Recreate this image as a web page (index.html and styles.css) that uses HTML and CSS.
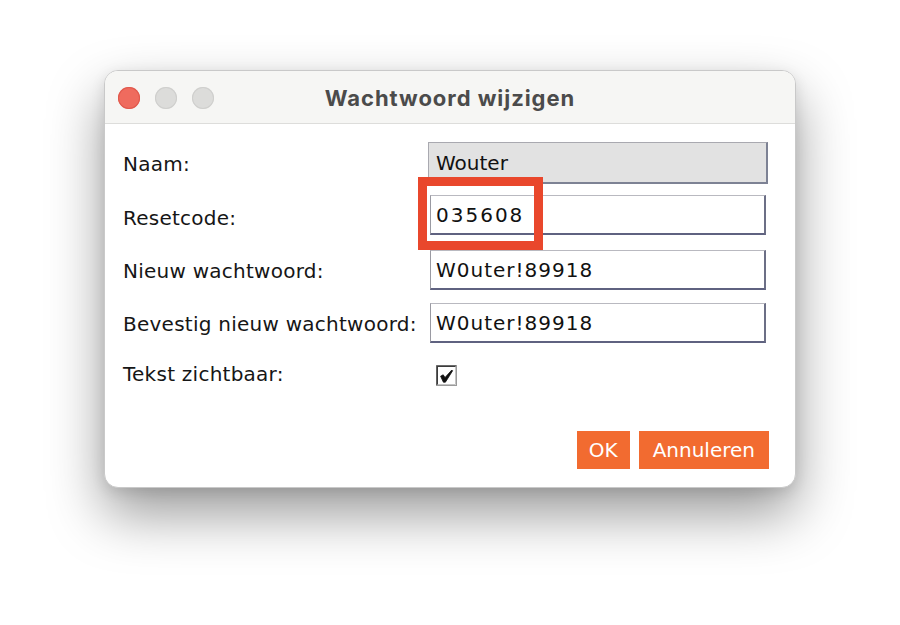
FILE: index.html
```html
<!DOCTYPE html>
<html lang="nl">
<head>
<meta charset="utf-8">
<title>Wachtwoord wijzigen</title>
<link rel="stylesheet" href="styles.css">
</head>
<body>
  <div class="window">
    <div class="titlebar">
      <div class="lights">
        <span class="light light-close"></span>
        <span class="light"></span>
        <span class="light"></span>
      </div>
      <div class="title">Wachtwoord wijzigen</div>
      <div></div>
    </div>
    <div class="content">
      <div class="form">
        <label class="label">Naam:</label>
        <div class="field field-readonly">Wouter</div>

        <label class="label">Resetcode:</label>
        <div class="field field-edit field-code">
          035608
          <span class="highlight"></span>
        </div>

        <label class="label">Nieuw wachtwoord:</label>
        <div class="field field-edit">W0uter!89918</div>

        <label class="label">Bevestig nieuw wachtwoord:</label>
        <div class="field field-edit">W0uter!89918</div>

        <label class="label">Tekst zichtbaar:</label>
        <div class="check-cell">
          <svg class="checkbox" width="21" height="21" viewBox="0 0 21 21">
            <rect x="0.5" y="0.5" width="20" height="20" fill="#fff" stroke="#9a9a9a"/>
            <path d="M1.2 20 V1.2 H20" fill="none" stroke="#3c3c3c" stroke-width="1.6"/>
            <path d="M1.5 19.5 H19.5 V1.5" fill="none" stroke="#c4c4c4" stroke-width="1"/>
            <path d="M4.6 11.2 L7.2 9.8 L9 12.6 L15.8 5 L16.6 5.8 L9.4 17.2 L7.4 17.2 Z" fill="#111" stroke="#111" stroke-width="0.8" stroke-linejoin="round"/>
          </svg>
        </div>
      </div>
      <div class="buttons">
        <button class="btn btn-ok">OK</button>
        <button class="btn btn-cancel">Annuleren</button>
      </div>
    </div>
  </div>
</body>
</html>
```

FILE: styles.css
```css
html, body {
  margin: 0;
  padding: 0;
  background: #ffffff;
}

body {
  width: 900px;
  height: 625px;
  overflow: hidden;
  padding: 70px 0 0 104px;
  box-sizing: border-box;
  font-family: "DejaVu Sans", "Liberation Sans", sans-serif;
}

.window {
  width: 692px;
  height: 418px;
  box-sizing: border-box;
  border-radius: 14px;
  background: #ffffff;
  border: 1px solid #c9c9c9;
  box-shadow: 0 26px 55px rgba(0, 0, 0, 0.40), 0 4px 14px rgba(0, 0, 0, 0.10);
  display: flex;
  flex-direction: column;
  overflow: hidden;
}

/* title bar with traffic lights */
.titlebar {
  height: 52px;
  flex: none;
  background: #f6f6f4;
  border-bottom: 1px solid #dddddb;
  display: grid;
  grid-template-columns: 1fr auto 1fr;
  align-items: center;
}

.lights {
  display: flex;
  gap: 15px;
  padding-left: 13px;
  padding-top: 1px;
}

.light {
  width: 22px;
  height: 22px;
  border-radius: 50%;
  background: #dcdcda;
  box-shadow: inset 0 0 0 1px #cfcfcd;
}

.light-close {
  background: #ef6b5e;
  box-shadow: inset 0 0 0 1px #e0594d;
}

.title {
  font-family: Inter, "Liberation Sans", sans-serif;
  font-weight: 700;
  font-size: 22px;
  letter-spacing: 0.95px;
  color: #4b4b4b;
  padding-top: 1px;
}

/* dialog body */
.content {
  flex: 1;
  display: flex;
  flex-direction: column;
  padding: 18px 26px 18px 18px;
}

.form {
  display: grid;
  grid-template-columns: 305px 1fr;
  grid-template-rows: 42px 40px 40px 40px 34px;
  row-gap: 13px;
  align-items: center;
}

.label {
  font-size: 20px;
  color: #161616;
  letter-spacing: 0.25px;
  padding-top: 2px;
}

.field {
  height: 100%;
  box-sizing: border-box;
  display: flex;
  align-items: center;
  padding-left: 7px;
  font-size: 20px;
  color: #111;
}

.field-readonly {
  margin-right: 1px;
  background: #e2e2e2;
  border-top: 1px solid #a9a9b0;
  border-left: 1px solid #a9a9b0;
  border-right: 2px solid #7d8294;
  border-bottom: 2px solid #7d8294;
  padding-left: 7px;
}

.field-edit {
  margin: 0 3px 0 2px;
  background: #ffffff;
  border-top: 1px solid #b9b9c0;
  border-left: 1px solid #9a9aa2;
  border-right: 2px solid #6c6f86;
  border-bottom: 2px solid #5f6280;
  padding-left: 5px;
  letter-spacing: 1px;
}

.field-code {
  position: relative;
  margin-top: -2px;
  margin-bottom: 2px;
  letter-spacing: 2px;
}

/* red annotation frame around the reset code */
.highlight {
  position: absolute;
  left: -13px;
  top: -19px;
  width: 125px;
  height: 73px;
  box-sizing: border-box;
  border: 9px solid #e9472c;
  pointer-events: none;
}

.check-cell {
  display: flex;
  align-items: center;
  padding-left: 8px;
  padding-top: 5px;
}

.checkbox {
  display: block;
}

.buttons {
  margin-top: auto;
  display: flex;
  justify-content: flex-end;
  gap: 9px;
}

.btn {
  height: 38px;
  border: none;
  background: #f26b30;
  color: #ffffff;
  font-family: "DejaVu Sans", "Liberation Sans", sans-serif;
  font-size: 20px;
  line-height: 38px;
}

.btn-ok {
  padding: 0 12px;
  min-width: 53px;
}

.btn-cancel {
  padding: 0 14px;
}
```
